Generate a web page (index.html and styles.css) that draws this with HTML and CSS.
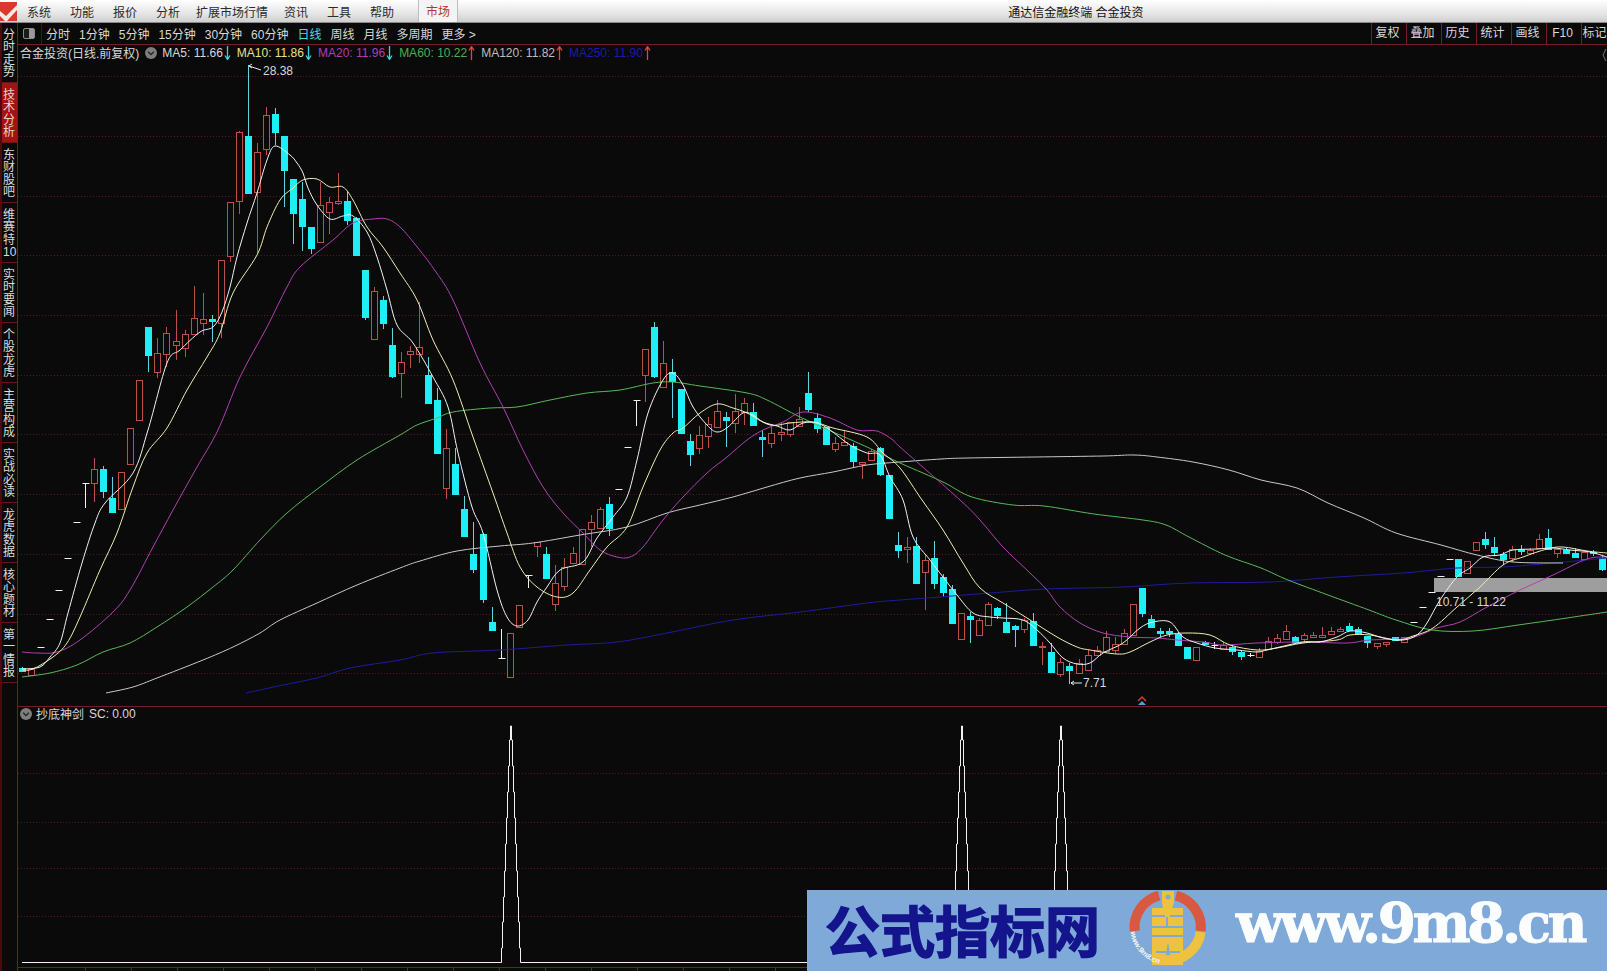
FILE: index.html
```html
<!DOCTYPE html>
<html lang="zh-CN">
<head>
    <meta charset="UTF-8">
    <title>通达信金融终端 合金投资</title>
    <link rel="stylesheet" href="styles.css">
</head>
<body>
    <!-- shared icons -->
    <svg class="icon-defs" width="0" height="0">
        <symbol id="arrow" viewBox="0 0 7 14">
            <path d="M3.5 0V13M1 9.5L3.5 13.5L6 9.5" fill="none" stroke="currentColor" stroke-width="1.3"/>
        </symbol>
        <symbol id="collapse" viewBox="0 0 12 12">
            <circle cx="6" cy="6" r="6" fill="#7d7d7d"/>
            <path d="M3.2 4.8L6 7.6L8.8 4.8" fill="none" stroke="#222" stroke-width="1.3"/>
        </symbol>
    </svg>

    <!-- Top menu -->
    <header class="menubar">
        <svg class="app-logo" viewBox="0 0 17 19">
            <rect width="17" height="19" fill="#d93a2b"/>
            <path d="M0 9L6 14L17 3V8L7 19H5L0 14Z" fill="#f4e9e4"/>
        </svg>
        <span class="menu-item">系统</span>
        <span class="menu-item">功能</span>
        <span class="menu-item">报价</span>
        <span class="menu-item">分析</span>
        <span class="menu-item wide">扩展市场行情</span>
        <span class="menu-item">资讯</span>
        <span class="menu-item">工具</span>
        <span class="menu-item">帮助</span>
        <span class="menu-tab">市场</span>
        <span class="app-title">通达信金融终端 合金投资</span>
    </header>

    <div class="workspace">
        <!-- Left tabs -->
        <nav class="side-tabs">
            <div class="side-tab">分时走势</div>
            <div class="side-tab active">技术分析</div>
            <div class="side-tab">东财股吧</div>
            <div class="side-tab">维赛特10</div>
            <div class="side-tab">实时要闻</div>
            <div class="side-tab">个股龙虎</div>
            <div class="side-tab">主营构成</div>
            <div class="side-tab">实战必读</div>
            <div class="side-tab">龙虎数据</div>
            <div class="side-tab">核心题材</div>
            <div class="side-tab">第一情报</div>
        </nav>

        <main class="content">
            <!-- Period toolbar -->
            <div class="period-bar">
                <div class="layout-box"><span class="layout-btn"></span></div>
                <div class="periods">
                    <span>分时</span>
                    <span>1分钟</span>
                    <span>5分钟</span>
                    <span>15分钟</span>
                    <span>30分钟</span>
                    <span>60分钟</span>
                    <span class="current">日线</span>
                    <span>周线</span>
                    <span>月线</span>
                    <span>多周期</span>
                    <span>更多 &gt;</span>
                </div>
                <div class="tools">
                    <span>复权</span>
                    <span>叠加</span>
                    <span>历史</span>
                    <span>统计</span>
                    <span>画线</span>
                    <span>F10</span>
                    <span>标记</span>
                </div>
            </div>

            <!-- Candlestick pane -->
            <section class="main-pane">
                <div class="pane-info">
                    <span class="stock-name">合金投资(日线.前复权)</span>
                    <svg class="collapse-icon"><use href="#collapse"/></svg>
                    <span class="ma ma5">MA5: 11.66<svg class="arrow down"><use href="#arrow"/></svg></span>
                    <span class="ma ma10">MA10: 11.86<svg class="arrow down"><use href="#arrow"/></svg></span>
                    <span class="ma ma20">MA20: 11.96<svg class="arrow down"><use href="#arrow"/></svg></span>
                    <span class="ma ma60">MA60: 10.22<svg class="arrow up"><use href="#arrow"/></svg></span>
                    <span class="ma ma120">MA120: 11.82<svg class="arrow up"><use href="#arrow"/></svg></span>
                    <span class="ma ma250">MA250: 11.90<svg class="arrow up"><use href="#arrow"/></svg></span>
                </div>
                <svg class="chart" viewBox="18 45 1589 661">
                    <g id="main-grid"></g>
                    <g id="candles"></g>
                    <rect class="range-band" x="1434" y="578" width="173" height="14"/>
                    <g id="ma-lines"></g>
                    <path class="pointer" d="M249 66L261 70M249 66L252 64M249 66L252 68"/>
                    <text class="chart-label" x="263" y="75">28.38</text>
                    <path class="pointer" d="M1071 683H1082M1071 683L1074 681M1071 683L1074 685"/>
                    <text class="chart-label" x="1083" y="687">7.71</text>
                    <text class="chart-label" x="1436" y="606">10.71 - 11.22</text>
                    <path class="mark-red" d="M1138 701L1142 697L1146 701"/>
                    <path class="mark-blue" d="M1138 705L1142 701L1146 705Z"/>
                    <path class="pointer dim" d="M1606 49L1603 55L1606 61"/>
                </svg>
            </section>

            <!-- Indicator pane -->
            <section class="sub-pane">
                <div class="pane-info">
                    <svg class="collapse-icon first"><use href="#collapse"/></svg>
                    <span class="stock-name">抄底神剑</span>
                    <span class="sc-value">SC: 0.00</span>
                </div>
                <svg class="chart" viewBox="18 707 1589 264">
                    <g id="sub-grid"></g>
                    <path id="sc-line" class="sc-line"/>
                </svg>
            </section>
        </main>
    </div>

    <!-- Site banner over the bottom right corner -->
    <aside class="banner">
        <span class="banner-name">公式指标网</span>
        <svg class="banner-logo" viewBox="0 5 100 81">
            <path class="ring-red" d="M14.7 46A33 33 0 0 1 39 10.5M56 10.5A33 33 0 0 1 80.7 46"/>
            <path class="ring-yellow" d="M80.7 47A33 33 0 0 1 44 75"/>
            <path class="figure" d="M42 6H54V18L52 23H63V80H52L48 57L44 80H32V23H43L42 18Z"/>
            <circle class="figure-hole" cx="48" cy="12" r="2.5"/>
            <rect class="figure-hole" x="32" y="30" width="13" height="2"/>
            <rect class="figure-hole" x="50" y="30" width="13" height="2"/>
            <rect class="figure-hole" x="32" y="41" width="31" height="2"/>
            <rect class="figure-hole" x="46" y="32" width="2" height="9"/>
            <rect class="figure-hole" x="32" y="50" width="31" height="2"/>
            <rect class="figure-hole" x="36" y="66" width="24" height="2"/>
            <path id="logo-curve" d="M10.5 47A38 38 0 0 0 42 79.5" fill="none"/>
            <text class="logo-url"><textPath href="#logo-curve">www.9m8.cn</textPath></text>
        </svg>
        <span class="banner-url">www.9m8.cn</span>
    </aside>

    <script src="chart.js"></script>
</body>
</html>
```

FILE: styles.css
```css
* {
    box-sizing: border-box;
}

html,
body {
    margin: 0;
    height: 100%;
    overflow: hidden;
    background-color: #0a0a0a;
    color: #d8d8d8;
    font-family: "Liberation Sans", "Noto Sans CJK SC", sans-serif;
    font-size: 12px;
}

.icon-defs {
    position: absolute;
}

/* top menu */
.menubar {
    height: 23px;
    display: flex;
    align-items: center;
    background: linear-gradient(#ffffff, #e6e6e6 60%, #cfcfcf);
    border-bottom: 1px solid #8a8a8a;
    color: #2b2b2b;
}

.app-logo {
    width: 17px;
    height: 19px;
    margin-right: 10px;
}

.menu-item {
    margin-right: 19px;
}

.menu-item.wide {
    margin-left: -3px;
    margin-right: 16px;
}

.menu-tab {
    width: 40px;
    height: 22px;
    margin-left: 5px;
    line-height: 24px;
    text-align: center;
    color: #b5362c;
    background-color: #f4f4f4;
    border-left: 1px solid #bdbdbd;
    border-right: 1px solid #bdbdbd;
}

.app-title {
    margin-left: 550px;
    color: #111;
}

.workspace {
    height: 948px;
    display: flex;
}

/* left tabs */
.side-tabs {
    width: 18px;
    flex-shrink: 0;
    background-color: #0a0a0a;
    border-left: 2px solid #4d0a0c;
    border-right: 1px solid #7a1a22;
}

.side-tab {
    height: 60px;
    width: 15px;
    padding: 6px 0 0 1px;
    line-height: 12.3px;
    word-break: break-all;
    color: #dcdcdc;
    border-bottom: 1px solid #6a1418;
}

.side-tab.active {
    background-color: #a01414;
    color: #f0d0c8;
}

.content {
    flex: 1;
    min-width: 0;
    display: flex;
    flex-direction: column;
}

/* period toolbar */
.period-bar {
    height: 22px;
    display: flex;
    align-items: center;
    border-bottom: 1px solid #7a1a22;
    background-color: #0a0a0a;
}

.layout-box {
    width: 24px;
    height: 100%;
    padding: 5px 0 0 5px;
    border-right: 1px solid #4d1216;
}

.layout-btn {
    display: block;
    width: 12px;
    height: 11px;
    border: 1px solid #8a8a8a;
    border-radius: 2px;
    background: linear-gradient(90deg, #1a1a1a 50%, #9a9a9a 50%);
}

.periods {
    display: flex;
    gap: 9px;
    margin-left: 4px;
    white-space: nowrap;
}

.periods .current {
    color: #4fd8e0;
}

.tools {
    flex: 0 0 236px;
    height: 100%;
    margin-left: auto;
    display: flex;
    overflow: hidden;
}

.tools span {
    flex: 0 0 35px;
    padding-right: 3px;
    line-height: 21px;
    text-align: center;
    border-left: 1px solid #7a1a22;
}

.tools span:last-child {
    flex-basis: 26px;
    padding-right: 0;
}

/* chart panes */
.main-pane {
    position: relative;
    height: 662px;
    border-bottom: 1px solid #7a1a22;
}

.sub-pane {
    position: relative;
    flex: 1;
}

.chart {
    display: block;
    width: 100%;
    height: 100%;
}

.pane-info {
    position: absolute;
    top: 0;
    left: 2px;
    display: flex;
    align-items: center;
    height: 15px;
    white-space: nowrap;
    z-index: 1;
}

.sub-pane .pane-info {
    top: -1px;
    left: 2px;
}

.collapse-icon {
    width: 12px;
    height: 12px;
    margin: 0 5px 0 6px;
}

.collapse-icon.first {
    margin: 0 4px 0 0;
}

.sc-value {
    margin-left: 5px;
}

.ma {
    display: flex;
    align-items: center;
    margin-right: 6px;
}

.arrow {
    width: 7px;
    height: 14px;
    margin-left: 1px;
}

.arrow.down {
    color: #3fd2dc;
}

.arrow.up {
    color: #d8483c;
    transform: scaleY(-1);
}

.ma5 {
    color: #d8d8d8;
}

.ma10 {
    color: #e8e08c;
}

.ma20 {
    color: #b23db4;
}

.ma60 {
    color: #4caf50;
}

.ma120 {
    color: #bdbdbd;
}

.ma250 {
    color: #1c1ca8;
}

/* things drawn in the svg */
.grid-line {
    stroke: #5c1518;
    stroke-dasharray: 1 2;
}

.candle-red {
    fill: #0a0a0a;
    stroke: #bb5048;
}

.wick-red {
    stroke: #bb5048;
}

.candle-cyan {
    fill: #1eeef6;
    stroke: #1eeef6;
}

.wick-cyan {
    stroke: #62d4de;
}

.wick-white {
    stroke: #f0f0f0;
}

.ma-line {
    fill: none;
    stroke-width: 1;
}

.range-band {
    fill: #9e9e9e;
}

.chart-label {
    fill: #d8d8d8;
    font-size: 12px;
}

.pointer {
    fill: none;
    stroke: #e8e8e8;
}

.pointer.dim {
    stroke: #777;
}

.mark-red {
    fill: none;
    stroke: #d8392c;
    stroke-width: 1.5;
}

.mark-blue {
    fill: #4a9fe0;
}

.sc-line {
    fill: none;
    stroke: #f2f2f2;
}

.bottom-line {
    stroke: #7a1a22;
}

/* banner */
.banner {
    position: absolute;
    left: 807px;
    top: 890px;
    right: 0;
    bottom: 0;
    display: flex;
    align-items: center;
    padding-left: 18px;
    background-color: #7ea9d8;
}

.banner-name {
    width: 276px;
    margin-bottom: 5px;
    font-family: "Noto Sans CJK SC", sans-serif;
    font-size: 55px;
    font-weight: 700;
    line-height: 1;
    white-space: nowrap;
    color: #14148c;
    -webkit-text-stroke: 1.5px #14148c;
}

.banner-logo {
    width: 100px;
    height: 81px;
    margin-left: 19px;
    flex-shrink: 0;
}

.ring-red {
    fill: none;
    stroke: #d9583f;
    stroke-width: 10;
}

.ring-yellow {
    fill: none;
    stroke: #eec23e;
    stroke-width: 10;
}

.figure {
    fill: #eec23e;
}

.figure-hole {
    fill: #7ea9d8;
}

.logo-url {
    fill: #f2f6fb;
    font-size: 7.5px;
    font-weight: 700;
    font-style: italic;
}

.banner-url {
    margin-left: 16px;
    margin-bottom: 16px;
    font-family: "DejaVu Serif", serif;
    font-size: 55px;
    font-weight: 700;
    line-height: 1;
    letter-spacing: -3.5px;
    color: #fbfdff;
    -webkit-text-stroke: 1px #fbfdff;
}
```

FILE: chart.js
```js
const NS = "http://www.w3.org/2000/svg";
const STEP = 9.03;

// grid rows, page y
const mainRows = [76, 136, 196, 255, 315, 375, 434, 494, 554, 614, 673];
const subRows = [773, 822, 868, 916];

// r/c: [type, high, top, bottom, low]   d: dash at y   w: [line top, tick, line bottom]
const candles = [
    ["c", 667, 668, 671, 672], ["r", 669, 669, 675, 675], ["d", 647], ["d", 619], ["d", 590], ["d", 558], ["d", 522],
    ["w", 483, 483, 508], ["r", 458, 469, 483, 502], ["c", 466, 469, 491, 498], ["c", 477, 498, 512, 512],
    ["r", 472, 472, 509, 509], ["r", 428, 428, 464, 464], ["r", 380, 380, 420, 421], ["c", 327, 327, 355, 372],
    ["r", 338, 353, 372, 378], ["r", 327, 333, 354, 367], ["r", 310, 341, 345, 360], ["r", 330, 334, 348, 357],
    ["r", 286, 318, 334, 334], ["r", 293, 319, 323, 335], ["c", 315, 319, 321, 342], ["r", 260, 260, 323, 338],
    ["r", 202, 202, 256, 262], ["r", 131, 132, 201, 214], ["c", 65, 136, 193, 193], ["r", 143, 152, 192, 253],
    ["r", 107, 115, 149, 155], ["c", 108, 114, 132, 145], ["c", 136, 136, 170, 207], ["c", 179, 179, 213, 244],
    ["c", 182, 199, 226, 251], ["c", 227, 227, 248, 254], ["r", 182, 205, 242, 242], ["r", 197, 202, 212, 234],
    ["r", 173, 201, 203, 205], ["c", 191, 201, 220, 225], ["c", 217, 218, 255, 255], ["c", 270, 270, 317, 320],
    ["r", 287, 291, 339, 339], ["c", 296, 300, 323, 329], ["c", 328, 345, 376, 378], ["r", 352, 362, 373, 398],
    ["r", 346, 351, 354, 368], ["r", 302, 347, 354, 363], ["c", 357, 375, 403, 403], ["c", 388, 400, 453, 453],
    ["r", 429, 448, 488, 499], ["c", 448, 464, 494, 494], ["c", 496, 509, 536, 536], ["c", 522, 554, 569, 573],
    ["c", 533, 534, 599, 603], ["c", 607, 622, 630, 630], ["w", 629, 658, 658], ["r", 633, 633, 677, 677],
    ["r", 605, 605, 627, 627], ["w", 575, 575, 588], ["r", 542, 542, 546, 557], ["c", 547, 554, 578, 578],
    ["r", 565, 583, 604, 611], ["r", 558, 567, 586, 591], ["r", 547, 553, 563, 563], ["r", 529, 529, 564, 564],
    ["r", 515, 522, 529, 547], ["r", 507, 509, 528, 528], ["c", 497, 504, 528, 536], ["d", 489], ["d", 447],
    ["w", 400, 400, 426], ["r", 349, 349, 375, 402], ["c", 322, 327, 376, 378], ["r", 341, 363, 387, 387],
    ["c", 359, 372, 381, 418], ["c", 389, 389, 433, 433], ["c", 434, 441, 454, 466], ["r", 426, 435, 448, 454],
    ["r", 417, 424, 436, 448], ["r", 400, 411, 427, 427], ["c", 412, 417, 420, 447], ["r", 394, 411, 423, 433],
    ["r", 398, 403, 412, 425], ["c", 403, 412, 425, 425], ["c", 430, 437, 439, 457], ["r", 427, 433, 443, 448],
    ["r", 423, 432, 434, 441], ["r", 422, 422, 434, 437], ["r", 407, 419, 426, 426], ["c", 372, 393, 409, 412],
    ["c", 413, 418, 428, 433], ["c", 427, 427, 444, 444], ["r", 437, 443, 449, 452], ["r", 431, 442, 445, 445],
    ["c", 443, 446, 461, 468], ["r", 462, 462, 464, 479], ["r", 449, 451, 460, 460], ["c", 447, 448, 474, 476],
    ["c", 475, 475, 518, 518], ["c", 532, 545, 550, 558], ["r", 537, 547, 549, 563], ["c", 537, 546, 583, 583],
    ["r", 555, 560, 572, 610], ["c", 541, 558, 583, 589], ["c", 574, 577, 592, 597], ["c", 585, 589, 623, 623],
    ["r", 613, 613, 639, 639], ["c", 612, 616, 619, 643], ["r", 618, 620, 635, 635], ["r", 602, 604, 625, 625],
    ["c", 607, 608, 615, 619], ["c", 603, 622, 632, 632], ["c", 625, 626, 629, 647], ["r", 618, 620, 629, 633],
    ["c", 613, 621, 645, 646], ["r", 642, 646, 647, 665], ["c", 643, 652, 672, 672], ["r", 658, 662, 674, 677],
    ["c", 663, 666, 670, 684], ["r", 659, 663, 673, 673], ["r", 650, 655, 670, 671], ["r", 646, 650, 655, 655],
    ["r", 631, 637, 651, 651], ["r", 637, 644, 650, 654], ["r", 629, 633, 644, 644], ["r", 604, 604, 635, 635],
    ["c", 588, 588, 613, 617], ["c", 615, 619, 627, 628], ["c", 628, 631, 633, 637], ["c", 628, 631, 633, 637],
    ["c", 632, 634, 645, 646], ["c", 647, 647, 658, 658], ["r", 647, 647, 660, 660], ["c", 641, 642, 644, 645],
    ["w", 642, 645, 649], ["r", 642, 645, 649, 649], ["c", 645, 647, 651, 655], ["c", 650, 652, 656, 660],
    ["w", 653, 655, 657], ["r", 648, 651, 657, 657], ["r", 637, 641, 649, 649], ["r", 634, 638, 642, 644],
    ["r", 625, 631, 639, 639], ["c", 636, 637, 642, 644], ["r", 633, 635, 639, 643], ["r", 632, 635, 637, 637],
    ["r", 627, 635, 637, 637], ["r", 627, 631, 634, 634], ["r", 627, 629, 631, 631], ["c", 623, 626, 630, 630],
    ["c", 627, 629, 633, 634], ["c", 636, 636, 642, 648], ["r", 643, 643, 646, 649], ["r", 642, 642, 644, 647],
    ["c", 637, 637, 640, 640], ["r", 637, 637, 642, 642], ["d", 622], ["d", 607], ["d", 592], ["d", 576], ["d", 559],
    ["c", 559, 559, 576, 576], ["r", 561, 561, 573, 573], ["r", 542, 542, 550, 550], ["c", 532, 539, 544, 549],
    ["c", 537, 547, 552, 556], ["c", 552, 554, 559, 565], ["r", 546, 549, 558, 562], ["c", 545, 549, 551, 555],
    ["r", 548, 550, 553, 553], ["r", 534, 539, 548, 548], ["c", 529, 538, 549, 549], ["r", 549, 549, 553, 558],
    ["c", 548, 550, 553, 553], ["c", 548, 553, 557, 557], ["r", 552, 552, 559, 559], ["c", 550, 552, 553, 556],
    ["c", 555, 558, 569, 571]
];

// moving averages, page coordinates
const maLines = [
    { color: "#1c1c9c", pts: [[246,693],[283,685],[317,678],[350,668],[400,660],[433,653],[500,650],[567,645],[617,642],[667,633],[733,620],[800,612],[867,603],[900,600],[940,597],[990,593],[1047,589],[1123,587],[1190,583],[1270,582],[1337,577],[1403,573],[1457,568],[1503,567],[1553,563],[1607,558]] },
    { color: "#c8c8c8", pts: [[106,693],[133,687],[157,678],[203,660],[233,647],[260,633],[280,620],[317,603],[357,585],[400,568],[420,561],[457,551],[500,546],[533,543],[580,535],[627,527],[667,513],[700,505],[733,497],[767,487],[800,478],[833,472],[867,465],[900,462],[941,459],[968,458],[1035,457],[1103,456],[1134,455],[1157,457],[1193,462],[1229,470],[1261,480],[1297,488],[1328,503],[1364,518],[1396,533],[1441,545],[1477,555],[1513,562],[1563,563]] },
    { color: "#58b858", pts: [[22,677],[50,673],[77,665],[103,652],[130,643],[157,627],[187,607],[213,587],[233,570],[260,540],[287,513],[320,487],[357,460],[400,435],[417,425],[437,418],[453,412],[490,408],[517,407],[550,400],[587,393],[620,390],[653,383],[673,382],[700,386],[747,393],[767,400],[800,417],[833,432],[867,447],[900,463],[923,473],[945,483],[972,497],[1013,505],[1044,506],[1094,514],[1143,520],[1166,525],[1189,537],[1225,555],[1261,568],[1288,580],[1328,595],[1369,610],[1396,620],[1432,630],[1473,631],[1518,625],[1567,618],[1607,612]] },
    { color: "#b040b2", pts: [[22,652],[37,653],[57,652],[80,640],[113,612],[130,590],[153,547],[173,510],[197,467],[218,430],[240,377],[267,327],[287,287],[300,267],[333,240],[353,223],[373,219],[387,219],[400,227],[418,248],[436,272],[453,300],[480,363],[503,407],[523,450],[543,487],[563,513],[583,533],[600,550],[617,557],[630,557],[643,547],[663,520],[683,497],[707,473],[727,457],[747,440],[763,430],[783,422],[803,412],[830,418],[857,430],[877,431],[893,440],[900,447],[960,500],[980,520],[1003,547],[1030,573],[1047,590],[1060,607],[1080,623],[1103,633],[1130,637],[1157,638],[1177,640],[1203,642],[1223,645],[1257,643],[1303,642],[1347,643],[1370,640],[1410,638],[1437,628],[1460,622],[1487,607],[1520,590],[1553,575],[1587,559],[1607,557]] },
    { color: "#f0eeb0", pts: [[22,670],[33,669],[53,657],[67,643],[80,617],[100,570],[117,533],[133,487],[147,453],[167,428],[187,390],[207,357],[220,333],[233,293],[257,255],[267,227],[280,200],[293,188],[303,180],[317,179],[330,187],[343,187],[353,200],[367,227],[383,247],[400,273],[417,300],[433,340],[453,380],[473,437],[493,493],[507,533],[520,567],[537,587],[557,597],[573,593],[590,570],[607,547],[627,527],[643,487],[660,450],[673,433],[683,428],[700,413],[717,404],[733,408],[747,413],[770,425],[790,423],[813,422],[833,428],[867,437],[883,453],[900,468],[922,500],[943,530],[963,563],[980,588],[1003,603],[1027,618],[1057,637],[1077,647],[1090,650],[1117,654],[1130,652],[1150,642],[1167,635],[1187,633],[1210,635],[1230,645],[1257,650],[1277,648],[1303,643],[1337,640],[1350,635],[1370,635],[1397,640],[1413,636],[1433,628],[1457,607],[1480,587],[1503,565],[1523,557],[1547,549],[1563,547],[1587,551],[1607,553]] },
    { color: "#f2f2f2", pts: [[22,669],[40,667],[50,657],[60,643],[68,613],[82,563],[95,523],[105,503],[133,473],[148,430],[167,363],[180,350],[200,332],[213,327],[222,312],[230,287],[237,257],[247,223],[257,193],[267,160],[275,146],[290,155],[297,163],[303,173],[308,188],[317,205],[330,219],[343,216],[353,216],[367,232],[377,257],[387,290],[397,325],[413,343],[433,377],[448,407],[458,453],[472,507],[483,533],[497,590],[507,617],[517,626],[528,620],[537,602],[547,587],[560,570],[583,562],[597,538],[613,517],[627,497],[637,460],[648,413],[663,380],[673,373],[683,385],[693,407],[707,425],[717,432],[728,427],[743,413],[753,415],[763,422],[777,426],[790,430],[803,423],[817,423],[830,430],[850,445],[867,453],[880,455],[890,477],[903,500],[913,537],[930,560],[943,577],[957,595],[973,613],[990,617],[1003,618],[1023,620],[1037,630],[1050,643],[1063,658],[1077,664],[1090,663],[1103,653],[1123,643],[1140,628],[1153,622],[1170,622],[1183,637],[1197,643],[1215,648],[1237,650],[1257,652],[1267,650],[1303,642],[1320,642],[1337,637],[1350,631],[1367,633],[1383,638],[1403,640],[1417,635],[1427,623],[1440,600],[1457,577],[1470,568],[1483,557],[1500,555],[1513,550],[1537,549],[1553,548],[1570,550],[1590,552],[1607,557]] }
];

// the three SC signals, by candle index
const signals = [54, 104, 115];
const stairs = [948, 922, 897, 871, 844, 818, 792, 766, 740, 726];

function el(parent, name, cls, attrs) {
    const node = document.createElementNS(NS, name);
    if (cls) node.setAttribute("class", cls);
    for (const key in attrs) node.setAttribute(key, attrs[key]);
    parent.appendChild(node);
    return node;
}

function line(parent, cls, x1, y1, x2, y2) {
    el(parent, "line", cls, { x1, y1, x2, y2 });
}

function drawGrid(id, rows) {
    const group = document.getElementById(id);
    rows.forEach(y => line(group, "grid-line", 18, y + 0.5, 1607, y + 0.5));
}

function drawCandles() {
    const group = document.getElementById("candles");
    candles.forEach((item, i) => {
        const x = Math.round(22 + i * STEP) + 0.5;
        const type = item[0];
        if (type === "d") {
            line(group, "wick-white", x - 3, item[1] + 0.5, x + 4, item[1] + 0.5);
        } else if (type === "w") {
            line(group, "wick-white", x, item[1], x, item[3]);
            line(group, "wick-white", x - 3, item[2] + 0.5, x + 4, item[2] + 0.5);
        } else {
            const kind = type === "r" ? "red" : "cyan";
            line(group, "wick-" + kind, x, item[1], x, item[2]);
            line(group, "wick-" + kind, x, item[3], x, item[4]);
            el(group, "rect", "candle-" + kind, {
                x: x - 3,
                y: item[2] + 0.5,
                width: 6,
                height: Math.max(item[3] - item[2], 1)
            });
        }
    });
}

// catmull-rom through the read points
function smoothPath(pts) {
    let d = "M" + pts[0].join(" ");
    for (let i = 0; i < pts.length - 1; i++) {
        const p0 = pts[i - 1] || pts[i];
        const p1 = pts[i];
        const p2 = pts[i + 1];
        const p3 = pts[i + 2] || p2;
        const c1x = p1[0] + (p2[0] - p0[0]) / 6;
        const c1y = p1[1] + (p2[1] - p0[1]) / 6;
        const c2x = p2[0] - (p3[0] - p1[0]) / 6;
        const c2y = p2[1] - (p3[1] - p1[1]) / 6;
        d += "C" + [c1x, c1y, c2x, c2y, p2[0], p2[1]].map(n => n.toFixed(1)).join(" ");
    }
    return d;
}

function drawMaLines() {
    const group = document.getElementById("ma-lines");
    maLines.forEach(ma => {
        el(group, "path", "ma-line", { d: smoothPath(ma.pts), stroke: ma.color });
    });
}

function drawSignals() {
    let d = "M22 962.5";
    signals.forEach(i => {
        const cx = Math.round(22 + i * STEP) + 0.5;
        d += "H" + (cx - 9);
        stairs.forEach((y, n) => {
            d += "V" + y + "H" + (n < 9 ? cx - 8 + n : cx);
        });
        d += "H" + (cx + 1);
        for (let n = 8; n >= 0; n--) {
            d += "V" + stairs[n] + "H" + (cx + 10 - n);
        }
        d += "V962.5";
    });
    document.getElementById("sc-line").setAttribute("d", d + "H1607");
}

function drawBottomAxis() {
    const group = document.getElementById("sub-grid");
    line(group, "bottom-line", 18, 967.5, 1607, 967.5);
    for (let x = 85; x < 1607; x += 46) {
        line(group, "bottom-line", x + 0.5, 967, x + 0.5, 971);
    }
}

drawGrid("main-grid", mainRows);
drawGrid("sub-grid", subRows);
drawBottomAxis();
drawCandles();
drawMaLines();
drawSignals();
```
